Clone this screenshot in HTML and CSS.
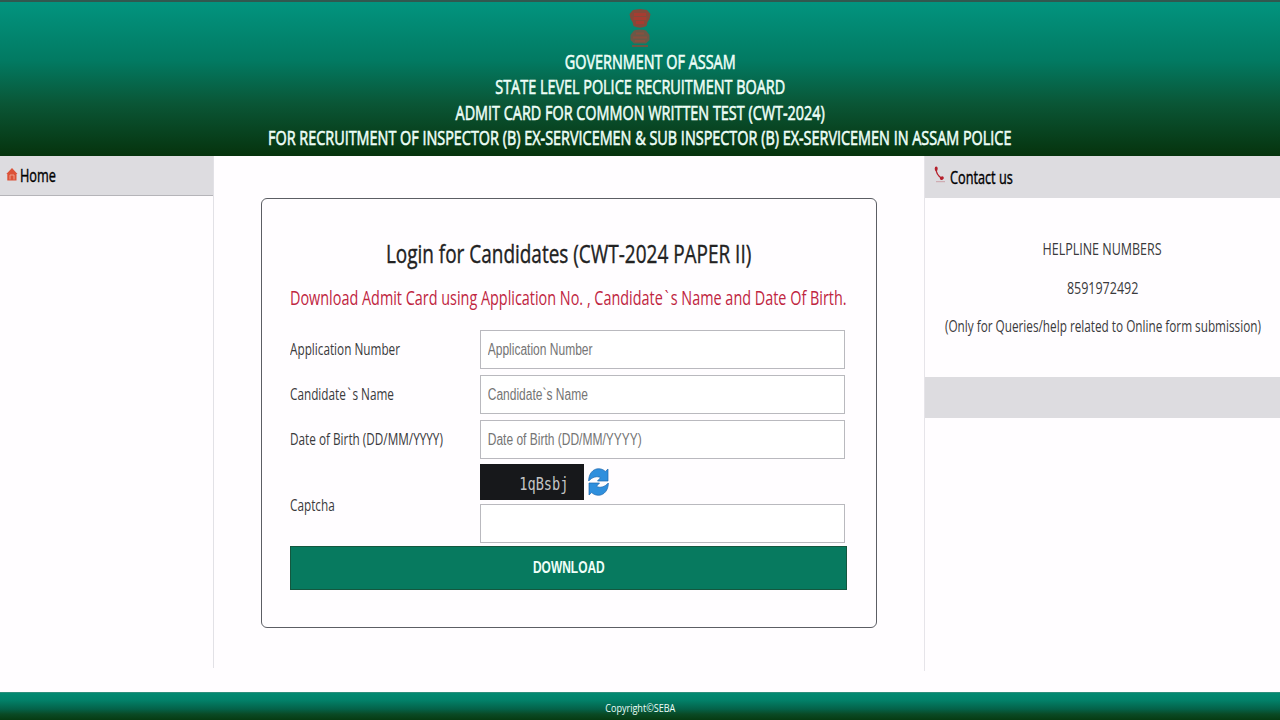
FILE: index.html
```html
<!DOCTYPE html>
<html lang="en">
<head>
  <meta charset="UTF-8" />
  <title>Admit Card</title>
  <link rel="stylesheet" href="styles.css">
</head>
<body>
  <header class="banner">
    <svg class="emblem" viewBox="0 0 24 40" width="24" height="40">
      <path d="M1.500 6 L5 2 L12 1 L19 2 L22.500 6 L21.500 11 L19.500 14 L18.500 18 Q12 21.500 5.500 18 L4.500 14 L2.500 11 Z" fill="#84493a"/>
      <path d="M6 6.500 h12 M5.500 10.500 h13 M8 14.500 h8" stroke="#a63c31" stroke-width="3" fill="none"/>
      <path d="M2.500 27 L6 22.500 Q12 20.500 18 22.500 L21.500 27 V32 L18 35.500 H6 L2.500 32 Z" fill="#6b5847"/>
      <path d="M5 29.500 h14 M8 25.500 h8 M7 33 h10" stroke="#87503f" stroke-width="2"/>
      <path d="M4 38 h16" stroke="#665744" stroke-width="2"/>
    </svg>
    <h1 class="line shifted"><span class="sq">GOVERNMENT OF ASSAM</span></h1>
    <h1 class="line"><span class="sq">STATE LEVEL POLICE RECRUITMENT BOARD</span></h1>
    <h1 class="line"><span class="sq">ADMIT CARD FOR COMMON WRITTEN TEST (CWT-2024)</span></h1>
    <h1 class="line"><span class="sq">FOR RECRUITMENT OF INSPECTOR (B) EX-SERVICEMEN &amp; SUB INSPECTOR (B) EX-SERVICEMEN IN ASSAM POLICE</span></h1>
  </header>

  <main class="columns">
    <nav class="left">
      <a class="bar home">
        <svg width="12" height="13" viewBox="0 0 12 13">
          <path d="M6 0 L11.500 6 H10.500 V12.500 H1.300 V6 H0.300 Z" fill="#dc5238"/>
          <path d="M4 11.500 V7 H8 V11.500" fill="none" stroke="#efa894" stroke-width="0.900"/>
        </svg>
        <span class="sq start">Home</span>
      </a>
    </nav>

    <section class="middle">
      <form class="login">
        <h2><span class="sq">Login for Candidates (CWT-2024 PAPER II)</span></h2>
        <p class="hint"><span class="sq start">Download Admit Card using Application No. , Candidate<i class="tick">`</i>s Name and Date Of Birth.</span></p>
        <div class="row">
          <label><span class="sq start">Application Number</span></label>
          <div class="field"><input type="text" placeholder="Application Number"></div>
        </div>
        <div class="row">
          <label><span class="sq start">Candidate<i class="tick">`</i>s Name</span></label>
          <div class="field"><input type="text" placeholder="Candidate`s Name"></div>
        </div>
        <div class="row">
          <label><span class="sq start">Date of Birth (DD/MM/YYYY)</span></label>
          <div class="field"><input type="text" placeholder="Date of Birth (DD/MM/YYYY)"></div>
        </div>
        <div class="row captcha-row">
          <label><span class="sq start">Captcha</span></label>
          <div class="captcha">
            <div class="captcha-top">
              <div class="code"><span>1qBsbj</span></div>
              <svg class="refresh" width="21" height="28" viewBox="0 0 21 28">
                <path d="M0.700 13 C0.500 6 5 0.700 10.500 0.700 C13.500 0.700 16 2 17.300 3.500 L20 1 V13 H9.500 L12.500 9.700 C9.500 7.700 4 9 0.700 13 Z" fill="#2f8fdd" stroke="#1b66ad" stroke-width="0.700"/>
                <path d="M20.300 15 C20.500 22 16 27.300 10.500 27.300 C7.500 27.300 5 26 3.700 24.500 L1 27 V15 H11.500 L8.500 18.300 C11.500 20.300 17 19 20.300 15 Z" fill="#2f8fdd" stroke="#1b66ad" stroke-width="0.700"/>
              </svg>
            </div>
            <div class="field"><input type="text"></div>
          </div>
        </div>
        <button type="button"><span class="sq">DOWNLOAD</span></button>
      </form>
    </section>

    <aside class="right">
      <div class="bar contact">
        <svg width="12" height="17" viewBox="0 0 12 17">
          <path d="M2 2 C1.800 7 4 10 8 12.500" fill="none" stroke="#b5202c" stroke-width="1.300"/>
          <ellipse cx="2.200" cy="2.800" rx="1.500" ry="2.200" fill="#b5202c"/>
          <ellipse cx="7.800" cy="12" rx="2.100" ry="1.700" transform="rotate(-35 8 12)" fill="#b5202c"/>
          <path d="M2 15.700 h9" stroke="#c99ba3" stroke-width="0.900"/>
        </svg>
        <span class="sq start">Contact us</span>
      </div>
      <div class="help">
        <p class="big"><span class="sq">HELPLINE NUMBERS</span></p>
        <p class="big"><span class="sq">8591972492</span></p>
        <p><span class="sq">(Only for Queries/help related to Online form submission)</span></p>
      </div>
      <div class="bar empty"></div>
    </aside>
  </main>

  <footer class="footer"><span class="sq">Copyright©SEBA</span></footer>
</body>
</html>
```
FILE: styles.css
```css
* {
  box-sizing: border-box;
}
body {
  margin: 0;
  height: 720px;
  overflow: hidden;
  display: flex;
  flex-direction: column;
  background: #fffdff;
  color: #3a3a3c;
  font-family: "Open Sans", sans-serif;
}
h1, h2, p {
  margin: 0;
}

/* condensed text */
.sq {
  display: inline-block;
  flex: none;
  white-space: nowrap;
  transform: scaleX(0.735);
}
.sq.start {
  transform-origin: left;
}
.tick {
  padding: 0 0.14em;
  font-style: normal;
}

.banner {
  height: 156px;
  padding-top: 6px;
  border-top: 2px solid #31584f;
  background: linear-gradient(#02947f 0%, #027a62 38%, #0a5636 66%, #06330d 100%);
  color: #eefff8;
  display: flex;
  flex-direction: column;
  align-items: center;
}
.emblem {
  flex: none;
  margin-bottom: 1px;
}
.line {
  height: 25.4px;
  line-height: 26px;
  font-size: 19.6px;
  font-weight: 400;
  -webkit-text-stroke: 0.6px;
  display: flex;
  justify-content: center;
}
.shifted {
  margin-left: 20px;
}

.columns {
  height: 536px;
  display: grid;
  grid-template-columns: 214px 710px 356px;
  align-items: start;
}
.bar {
  display: flex;
  background: #dddce0;
  color: #000;
  font-size: 17.3px;
  -webkit-text-stroke: 0.4px;
}
.left {
  height: 512px;
  border-right: 1px solid #e2e1e6;
}
.home {
  height: 40px;
  padding: 12px 0 0 6px;
  gap: 2px;
  line-height: 15px;
  border-bottom: 1px solid #b5b4b9;
}
.middle {
  padding: 42px 47px 0;
}
.login {
  height: 430px;
  padding: 39px 29px 0 28px;
  border: 1px solid #5c5e64;
  border-radius: 6px;
}
.login h2 {
  height: 30px;
  line-height: 30px;
  font-size: 25.8px;
  font-weight: 400;
  color: #222;
  -webkit-text-stroke: 0.4px;
  display: flex;
  justify-content: center;
}
.hint {
  margin-top: 15px;
  height: 30px;
  line-height: 30px;
  font-size: 19.6px;
  color: #c0253f;
}
.row {
  display: flex;
  align-items: center;
  height: 39px;
  margin-bottom: 6px;
  font-size: 16px;
}
.hint + .row {
  margin-top: 17px;
}
.row label {
  width: 190px;
  flex: none;
  padding-bottom: 1px;
}
.field {
  width: 365px;
  height: 39px;
  border: 1px solid #b9b9be;
  background: #fff;
  overflow: hidden;
}
.field input {
  display: block;
  width: 490px;
  height: 37px;
  padding: 0 9px;
  border: 0;
  background: none;
  font: 16px "Liberation Sans", sans-serif;
  transform: scaleX(0.75);
  transform-origin: left;
}
.field input::placeholder {
  color: #757575;
}
.captcha-row {
  height: 79px;
  margin: -1px 0 3px;
}
.captcha-row label {
  padding: 3px 0 0;
}
.captcha-top {
  display: flex;
  gap: 4px;
  height: 40px;
}
.code {
  width: 104px;
  height: 36px;
  padding-right: 16px;
  background: #17181b;
  color: #c4c4c4;
  font: 17px/40px "DejaVu Sans Mono", monospace;
  text-align: right;
}
.code span {
  display: inline-block;
  transform: scaleX(0.8);
  transform-origin: right;
}
.refresh {
  margin-top: 4px;
}
.login button {
  display: block;
  width: 557px;
  height: 44px;
  padding: 0 0 2px;
  border: 1px solid #14573f;
  background: #077a5f;
  color: #f0fff9;
  font: bold 16.3px "Liberation Sans", sans-serif;
}

.right {
  height: 515px;
  border-left: 1px solid #e6e4e9;
}
.contact {
  height: 42px;
  padding: 10px 0 0 9px;
  gap: 4px;
  line-height: 23px;
}
.help {
  height: 179px;
  padding-top: 31px;
  font-size: 16px;
}
.help p {
  height: 39px;
  line-height: 39px;
  display: flex;
  justify-content: center;
}
.help .big {
  font-size: 17px;
}
.empty {
  height: 41px;
}
.footer {
  height: 28px;
  border-top: 1px solid #2d8f7c;
  background: linear-gradient(#028a72 0%, #02826a 25%, #046148 60%, #0a4a25 78%, #063b12 100%);
  color: #eefff8;
  font-size: 11.2px;
  line-height: 29px;
  text-align: center;
}
.footer .sq {
  transform: scaleX(0.81);
}
```
